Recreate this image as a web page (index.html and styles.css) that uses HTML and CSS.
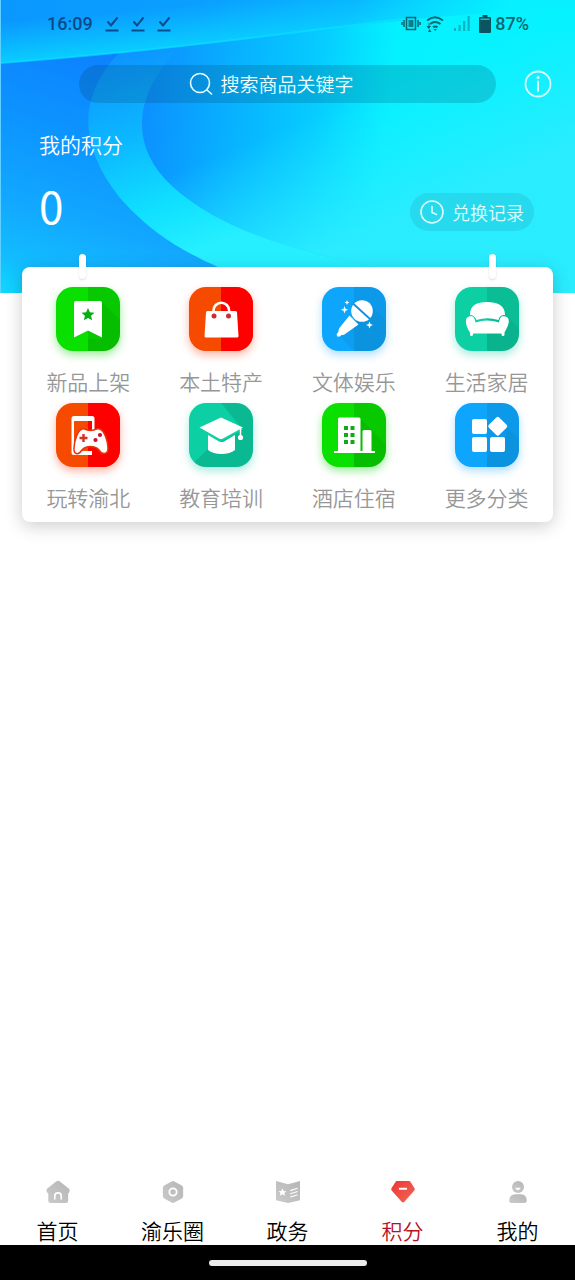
FILE: index.html
```html
<!DOCTYPE html>
<html lang="zh-CN">
<head>
<meta charset="utf-8">
<meta name="viewport" content="width=device-width, initial-scale=1">
<title>积分</title>
<link rel="stylesheet" href="styles.css">
</head>
<body>
<div class="app">
  <header class="hero">
    <svg class="hero-art" viewBox="0 0 575 293" preserveAspectRatio="none" aria-hidden="true">
      <defs>
        <linearGradient id="base" gradientUnits="userSpaceOnUse" x1="90" y1="40" x2="10" y2="300">
          <stop offset="0" stop-color="#0c80ff"/><stop offset=".35" stop-color="#0c94ff"/><stop offset=".65" stop-color="#12a8ff"/><stop offset=".85" stop-color="#12bcff"/><stop offset="1" stop-color="#10dcff"/>
        </linearGradient>
        <linearGradient id="band" gradientUnits="userSpaceOnUse" x1="130" y1="50" x2="200" y2="250">
          <stop offset="0" stop-color="#0d94ff"/><stop offset=".4" stop-color="#0cb8ff"/><stop offset=".75" stop-color="#10e0ff"/><stop offset="1" stop-color="#26f0ff"/>
        </linearGradient>
        <linearGradient id="disc" gradientUnits="userSpaceOnUse" x1="145" y1="80" x2="430" y2="110">
          <stop offset="0" stop-color="#0c90ff"/><stop offset=".3" stop-color="#08b0ff"/><stop offset=".6" stop-color="#06ccff"/><stop offset=".85" stop-color="#04f0ff"/><stop offset="1" stop-color="#06f2ff"/>
        </linearGradient>
        <linearGradient id="low" gradientUnits="userSpaceOnUse" x1="290" y1="125" x2="340" y2="245">
          <stop offset="0" stop-color="#26ecff" stop-opacity="0"/><stop offset="1" stop-color="#2cecff" stop-opacity=".95"/>
        </linearGradient>
        <linearGradient id="wedge" gradientUnits="userSpaceOnUse" x1="0" y1="0" x2="575" y2="0">
          <stop offset="0" stop-color="#0a98ff"/><stop offset=".35" stop-color="#0aa0ff"/><stop offset=".7" stop-color="#08b8ff"/><stop offset="1" stop-color="#06ceff"/>
        </linearGradient>
        <linearGradient id="glow" gradientUnits="userSpaceOnUse" x1="250" y1="0" x2="254" y2="46">
          <stop offset="0" stop-color="#0cd0ff" stop-opacity="0"/><stop offset="1" stop-color="#08d4ff"/>
        </linearGradient>
        <linearGradient id="fade" gradientUnits="userSpaceOnUse" x1="360" y1="0" x2="480" y2="60">
          <stop offset="0" stop-color="#06f2ff" stop-opacity="0"/><stop offset="1" stop-color="#06f2ff" stop-opacity=".95"/>
        </linearGradient>
      </defs>
      <path fill="url(#base)" d="M0 0H575V293H0Z"/>
      <path fill="url(#band)" d="M132 40C78 88 74 140 120 198C150 232 180 250 218 267L270 293H575V0H200Z"/>
      <path fill="url(#disc)" d="M186 40C132 92 128 145 172 186C216 226 280 246 350 262L480 293H575V0H230Z"/>
      <path fill="url(#low)" d="M186 40C132 92 128 145 172 186C216 226 280 246 350 262L480 293H575V0H230Z"/>
      <path fill="url(#wedge)" d="M0 0H575V7C470 12 330 27 250 38C160 49 80 57 0 63Z"/>
      <path fill="url(#glow)" d="M0 0H575V7C470 12 330 27 250 38C160 49 80 57 0 63Z"/>
      <path fill="none" stroke="#0ce4ff" stroke-opacity=".6" stroke-width="2" d="M0 63C80 57 160 49 250 38C310 30 360 24 410 18"/>
      <path fill="url(#fade)" d="M300 0H575V32H300Z"/>
      <path fill="#5fd0ff" d="M0 0H1V293H0Z"/>
    </svg>

    <div class="status">
      <div class="status-side">
        <span>16:09</span>
        <svg class="done" viewBox="0 0 14 17"><path d="M2.500 5.500l3.500 4 6.500-8"/><path d="M.5 14.500H13.500"/></svg>
        <svg class="done" viewBox="0 0 14 17"><path d="M2.500 5.500l3.500 4 6.500-8"/><path d="M.5 14.500H13.500"/></svg>
        <svg class="done" viewBox="0 0 14 17"><path d="M2.500 5.500l3.500 4 6.500-8"/><path d="M.5 14.500H13.500"/></svg>
      </div>
      <div class="status-side status-right">
        <svg width="20" height="20" viewBox="0 0 20 20" fill="none" stroke="#0b6672" stroke-width="1.500"><rect x="5.500" y="3.500" width="9" height="12"/><path fill="#0b7f8c" stroke="none" d="M7.500 6h5v7h-5Z"/><path d="M3 6v7M1 8v3M17 6v7M19 8v3"/></svg>
        <svg width="20" height="20" viewBox="0 0 20 20" fill="none" stroke="#0b6672" stroke-width="2"><path d="M2 6.500Q10 0 18 6.500M5 10Q10 6 15.500 10M8 13Q10 12 12.500 13"/><path fill="#0b6672" stroke="none" d="M8.500 15h3.500l-1.700 2ZM1.500 12h2v-3h1v3h1.500l-2.200 3ZM3 18l1.500-3 2 3Z"/></svg>
        <svg class="signal" width="18" height="20" viewBox="0 0 18 20" fill="#0ab4c2"><path d="M1 14h2v3H1ZM5.500 11h2.200v6H5.500ZM10 7h2.200v10H10ZM14.500 2h2.200v15h-2.200Z"/></svg>
        <svg class="battery" width="12" height="20" viewBox="0 0 12 20"><path fill="#0b5560" d="M3.500 1h5v2H11a1 1 0 0 1 1 1v14a1 1 0 0 1-1 1H1a1 1 0 0 1-1-1V4a1 1 0 0 1 1-1h2.500Z"/><path fill="#0fbfcc" d="M1.500 4.500h9V6h-9Z"/></svg>
        <span>87%</span>
      </div>
    </div>

    <div class="toolbar">
      <form class="search" role="search">
        <label class="search-label" for="q"><svg width="24" height="24" viewBox="0 0 24 24" fill="none" stroke="#e8ffff" stroke-width="1.600" stroke-linecap="round"><circle cx="11" cy="11" r="9.500"/><path d="M18 18l4.500 4"/></svg></label>
        <input class="search-input" id="q" type="text" placeholder="搜索商品关键字" aria-label="搜索商品关键字">
      </form>
      <button class="info" type="button" aria-label="说明">
        <svg width="28" height="28" viewBox="0 0 28 28" fill="none" stroke="#d8fcff"><circle cx="14" cy="14" r="12.500" stroke-width="1.800"/><path d="M14 11.500V21" stroke-width="2" stroke-linecap="round"/><circle cx="14" cy="7.500" r="1.600" fill="#d8fcff" stroke="none"/></svg>
      </button>
    </div>

    <h1 class="points-title">我的积分</h1>
    <div class="points-row">
      <strong class="points">0</strong>
      <button class="history" type="button">
        <svg width="24" height="24" viewBox="0 0 24 24" fill="none" stroke="#d8ffff" stroke-width="1.600" stroke-linecap="round"><circle cx="12" cy="12" r="11"/><path d="M12 6.500V12.500l4.500 2"/></svg>
        兑换记录
      </button>
    </div>
  </header>

  <main class="content">
    <nav class="card" aria-label="商品分类">
      <a class="item" href="#new">
        <svg class="tile green" viewBox="0 0 64 64"><path fill="#000" opacity=".1" d="M32 0H64V64H32Z"/><path fill="#000" opacity=".06" d="M46 15L64 33V64H32V52L46 52Z"/><path fill="#fff" d="M20 14H44a2 2 0 0 1 2 2V50.500L32 43.500 18 50.500V16a2 2 0 0 1 2-2Z"/><path fill="#0aae14" d="M32 21l1.900 4.200 4.600.5-3.400 3.100 1 4.500-4.100-2.300-4.100 2.300 1-4.500-3.400-3.100 4.600-.5Z"/></svg>
        <span>新品上架</span>
      </a>
      <a class="item" href="#local">
        <svg class="tile red" viewBox="0 0 64 64"><path fill="#fe0000" d="M32 0H64V64H32Z"/><path fill="none" stroke="#fff" stroke-width="2.600" d="M24.500 27V23.500a7.800 7.800 0 0 1 15.600 0V27"/><path fill="#fff" d="M18.500 24H46.500a1.500 1.500 0 0 1 1.500 1.500L49.500 49a1.500 1.500 0 0 1-1.500 1.500H17a1.500 1.500 0 0 1-1.500-1.500L17 25.500a1.500 1.500 0 0 1 1.500-1.500Z"/><g fill="#d02a32"><circle cx="25" cy="29" r="2.500"/><circle cx="39.500" cy="29" r="2.500"/></g></svg>
        <span>本土特产</span>
      </a>
      <a class="item" href="#fun">
        <svg class="tile blue" viewBox="0 0 64 64"><path fill="#000" opacity=".07" d="M32 0H64V64H32Z"/><path fill="#000" opacity=".04" d="M48 17L64 33V64H32L17 49Z"/><path fill="#fff" d="M27.500 28.500L36.500 37.500 22 47.800l-3 .5-.8 1.200h-3.200l-.3-2.500 1.500-1.800.8-3.700Z"/><circle cx="40" cy="24" r="10.800" fill="#fff"/><path stroke="#128fe0" stroke-width="1.800" d="M31 16.500L48 32"/><path fill="#fff" d="M22.500 19l1 2.700 2.700 1-2.700 1-1 2.700-1-2.700-2.700-1 2.700-1ZM25 13l.7 1.800 1.800.7-1.800.7L25 18l-.7-1.800-1.800-.7 1.800-.7ZM47.500 34.500l1 2.500 2.500 1-2.500 1-1 2.500-1-2.500-2.500-1 2.500-1Z"/></svg>
        <span>文体娱乐</span>
      </a>
      <a class="item" href="#home-life">
        <svg class="tile teal" viewBox="0 0 64 64"><path fill="#000" opacity=".09" d="M32 0H64V64H32Z"/><path fill="#000" opacity=".05" d="M53 30L64 41V64H32V47H48Z"/><path fill="#fff" d="M15 28C15 18 22 15 32 15S50 18 50 28C46 28 44 30 43.500 33Q32 29.500 21.500 33C20.500 30 18 28 15 28Z"/><path fill="#fff" d="M14 29.500C18 28.500 19.500 30 20.500 35.500Q32 31.500 44 35.500C45 30 46.500 28.500 50.500 29.500 56 31 54 38 49.500 45.500V47.500A1.500 1.500 0 0 1 46.500 47.500V46.500H18V47.500A1.500 1.500 0 0 1 15 47.500V45.500C10.500 39 9 31 14 29.500Z"/></svg>
        <span>生活家居</span>
      </a>
      <a class="item" href="#yubei">
        <svg class="tile red" viewBox="0 0 64 64"><path fill="#fe0000" d="M32 0H64V64H32Z"/><path fill="#fff" fill-rule="evenodd" d="M18 13H36a2.500 2.500 0 0 1 2.500 2.500V27H36V18H18V48H36V52H18a2.500 2.500 0 0 1-2.500-2.500V15.500A2.500 2.500 0 0 1 18 13Z"/><path fill="#fff" stroke="#ec3208" stroke-width="1.500" d="M26 26C29 25 30 27.500 34.500 27.500S40 25 43.500 26C48 27 52 38 52 45 52 52 46 52 43 47Q40 43.500 34.500 43.500T26 47C22 53 17.500 51 18 45 18 38 22 27 26 26Z"/><path stroke="#d8321c" stroke-width="2.400" d="M27.500 31V39M23.500 35H31.500"/><g fill="#c81030"><circle cx="44" cy="32" r="2.100"/><circle cx="39.500" cy="37" r="2.100"/></g></svg>
        <span>玩转渝北</span>
      </a>
      <a class="item" href="#edu">
        <svg class="tile teal" viewBox="0 0 64 64"><path fill="#000" opacity=".11" d="M54 27L32 0H64V64H0L20 45Z"/><path fill="#fff" d="M32 14.500L54 24.500 34 35.500Q32 36.500 30 35.500L10.500 24.500Z"/><path fill="#fff" d="M19 32L30 38.500Q32.500 39.500 35 38.500L46 32V47Q41 51 32.500 51T19 47Z"/><path fill="none" stroke="#fff" stroke-width="1.500" d="M51.500 25V33"/><circle cx="51.500" cy="34.500" r="2.600" fill="#fff"/></svg>
        <span>教育培训</span>
      </a>
      <a class="item" href="#hotel">
        <svg class="tile green" viewBox="0 0 64 64"><path fill="#000" opacity=".1" d="M32 0H64V64H32Z"/><path fill="#000" opacity=".06" d="M39 16L64 41V64H32V49Z"/><path fill="#fff" d="M16 16a1.500 1.500 0 0 1 1.500-1.500H37A1.500 1.500 0 0 1 38.500 16V48H40.500V28.500A1.500 1.500 0 0 1 42 27H48A1.500 1.500 0 0 1 49.500 28.500V48H53V50H12V48H16Z"/><path fill="#12a818" d="M22 23h4v4h-4ZM28.500 23h4v4h-4ZM22 30h4v4h-4ZM28.500 30h4v4h-4ZM22 37h4v4h-4ZM28.500 37h4v4h-4Z"/></svg>
        <span>酒店住宿</span>
      </a>
      <a class="item" href="#more">
        <svg class="tile blue" viewBox="0 0 64 64"><path fill="#000" opacity=".07" d="M32 0H64V64H32Z"/><path fill="#000" opacity=".04" d="M51 23L64 36V64H32V49H50Z"/><g fill="#fff"><rect x="17" y="16" width="15" height="15" rx="2"/><rect x="17" y="34" width="15" height="15" rx="2"/><rect x="35" y="34" width="15" height="15" rx="2"/><rect x="35.500" y="16" width="14.500" height="14.500" rx="2" transform="rotate(45 42.750 23.250)"/></g></svg>
        <span>更多分类</span>
      </a>
    </nav>
  </main>

  <nav class="tabs" aria-label="主导航">
    <svg class="defs" width="0" height="0" aria-hidden="true"><defs>
      <linearGradient id="grey" x1="0" y1="1" x2="1" y2="0"><stop offset="0" stop-color="#cacaca"/><stop offset="1" stop-color="#b6b6b6"/></linearGradient>
      <linearGradient id="ruby" x1="0" y1="0" x2="1" y2="1"><stop offset="0" stop-color="#ee3434"/><stop offset="1" stop-color="#f06a58"/></linearGradient>
    </defs></svg>
    <a class="tab" href="#index">
      <svg viewBox="0 0 26 26"><path fill="url(#grey)" d="M11 1.500Q13 .3 15 1.500L25 9.500Q26.500 12.800 24 14.500V22.500A2.500 2.500 0 0 1 21.500 25H5A2.500 2.500 0 0 1 2.500 22.500V14.500Q-.5 12.800 1 9.500Z"/><path fill="none" stroke="#fff" stroke-width="1.800" d="M9.500 21V17.500a3.500 3.500 0 0 1 7 0V21"/></svg>
      <span>首页</span>
    </a>
    <a class="tab" href="#circle">
      <svg viewBox="0 0 26 26"><path fill="url(#grey)" d="M11.500 1.500Q13 .5 14.500 1.500L22.500 6Q24 7 24 8.500V17.500Q24 19 22.500 20L14.500 24.500Q13 25.500 11.500 24.500L3.500 20Q2 19 2 17.500V8.500Q2 7 3.500 6Z"/><circle cx="13" cy="13" r="4" fill="none" stroke="#fff" stroke-width="2"/></svg>
      <span>渝乐圈</span>
    </a>
    <a class="tab" href="#gov">
      <svg viewBox="0 0 26 26"><path fill="url(#grey)" d="M0 1L13 4.500 26 1V22L13 25 0 22Z"/><path fill="#fff" d="M7 9l1.300 2.800 3 .3-2.200 2 .7 3L7 15.500l-2.800 1.600.7-3-2.200-2 3-.3Z"/><path stroke="#fff" stroke-width="1.200" d="M15.500 11.500L23.500 9M15.500 15L23.500 12.500M15.500 18.500L23.500 16"/></svg>
      <span>政务</span>
    </a>
    <a class="tab active" href="#points" aria-current="page">
      <svg viewBox="0 0 26 26"><path fill="url(#ruby)" d="M6.500 1H19.500Q20.500 1 21 2L25.500 9Q26 10 25.500 11L14.500 23.500Q13 25 11.500 23.500L.5 11Q0 10 .5 9L5 2Q5.500 1 6.500 1Z"/><path stroke="#fff" stroke-width="2" stroke-linecap="round" d="M9.500 9.500h7"/></svg>
      <span>积分</span>
    </a>
    <a class="tab" href="#me">
      <svg viewBox="0 0 26 26"><circle cx="13" cy="7.500" r="6.500" fill="url(#grey)"/><path fill="url(#grey)" d="M10 15.500H16Q22.500 16 22.500 22.500A2.500 2.500 0 0 1 20 25H6A2.500 2.500 0 0 1 3.500 22.500Q3.500 16 10 15.500Z"/><path fill="#fff" d="M10 8.500h6Q15 11 13 11T10 8.500Z"/></svg>
      <span>我的</span>
    </a>
  </nav>
  <div class="system-bar"><span class="handle"></span></div>
</div>
</body>
</html>
```
FILE: styles.css
```css
* {
  box-sizing: border-box;
}

body {
  margin: 0;
  background: #fff;
  font-family: "Noto Sans CJK SC", "Noto Sans", sans-serif;
  font-weight: 350;
}

a {
  color: inherit;
  text-decoration: none;
}

button,
input {
  border: 0;
  padding: 0;
  background: none;
  color: #fff;
  font: inherit;
}

svg {
  display: block;
  flex: none;
}

.app {
  display: flex;
  flex-direction: column;
  min-height: 100vh;
}

.hero {
  position: relative;
  padding-bottom: 62px;
  color: #fff;
}

.hero-art {
  position: absolute;
  inset: 0;
  z-index: -1;
  width: 100%;
  height: 100%;
}

.status {
  display: flex;
  justify-content: space-between;
  padding: 12px 46px 0 47px;
  color: #0b4a8c;
  font: 500 18px/24px Roboto, sans-serif;
}

.status-side {
  display: flex;
  align-items: center;
  gap: 12px;
}

.status-right {
  gap: 4px;
  color: #0b6672;
}

.signal {
  margin: 0 4px;
}

.done {
  width: 14px;
  height: 17px;
  fill: none;
  stroke: #0b4a8c;
  stroke-width: 2;
}

.toolbar {
  display: flex;
  align-items: center;
  gap: 28px;
  margin-top: 29px;
  padding: 0 23px 0 79px;
}

.search {
  display: flex;
  flex: 1;
  align-items: center;
  justify-content: center;
  gap: 8px;
  height: 38px;
  padding-right: 30px;
  border-radius: 19px;
  background: rgba(0, 60, 90, 0.2);
}

.search-input {
  width: 136px;
  height: 36px;
  padding-bottom: 2px;
  font-size: 19px;
  outline: 0;
}

.search-input::placeholder {
  color: #f0ffff;
  opacity: 1;
}

.points-title {
  margin: 26px 0 0;
  padding-left: 39px;
  font-size: 21px;
  font-weight: 350;
  line-height: 30px;
}

.points-row {
  display: flex;
  align-items: flex-end;
  justify-content: space-between;
  margin-top: 21px;
  padding: 0 41px 0 39px;
}

.points {
  font-size: 44px;
  font-weight: 400;
  line-height: 51px;
}

.history {
  display: flex;
  align-items: center;
  gap: 8px;
  height: 38px;
  padding: 0 10px;
  border-radius: 19px;
  background: rgba(30, 150, 170, 0.22);
  color: #e0ffff;
  font-size: 18px;
}

.content {
  flex: 1;
  padding: 0 22px;
}

.card {
  position: relative;
  display: grid;
  grid-template-columns: repeat(4, 1fr);
  row-gap: 8px;
  margin-top: -26px;
  padding: 20px 0 11px;
  border-radius: 8px;
  background: #fff;
  box-shadow: 0 4px 18px rgba(0, 0, 0, 0.2);
}

.card::before,
.card::after {
  content: "";
  position: absolute;
  top: -13px;
  left: 57px;
  width: 7px;
  height: 25px;
  border-radius: 4px;
  background: #fff;
  box-shadow: 0 1px 2px rgba(0, 0, 0, 0.15);
}

.card::after {
  right: 57px;
  left: auto;
}

.item {
  display: flex;
  flex-direction: column;
  align-items: center;
  gap: 16px;
  color: #979797;
  font-size: 21px;
  line-height: 28px;
}

.tile {
  width: 64px;
  height: 64px;
  border-radius: 17px;
}

.green {
  background: #0ae000;
  box-shadow: 0 4px 8px rgba(10, 210, 10, 0.4);
}

.red {
  background: #f54a00;
  box-shadow: 0 4px 8px rgba(250, 70, 30, 0.4);
}

.blue {
  background: #0ea5fc;
  box-shadow: 0 4px 8px rgba(20, 160, 250, 0.35);
}

.teal {
  background: #0cd0a4;
  box-shadow: 0 4px 8px rgba(12, 200, 160, 0.35);
}

.tabs {
  position: relative;
  display: grid;
  grid-template-columns: repeat(5, 1fr);
  padding-bottom: 1px;
}

.defs {
  position: absolute;
}

.tab {
  display: flex;
  flex-direction: column;
  align-items: center;
  gap: 12px;
  color: #000;
  font-size: 21px;
  line-height: 28px;
}

.tab svg {
  width: 24px;
  height: 24px;
}

.active {
  color: #b8101f;
}

.system-bar {
  display: flex;
  align-items: center;
  justify-content: center;
  height: 35px;
  background: #000;
}

.handle {
  width: 158px;
  height: 6px;
  border-radius: 3px;
  background: #ececec;
}
```
